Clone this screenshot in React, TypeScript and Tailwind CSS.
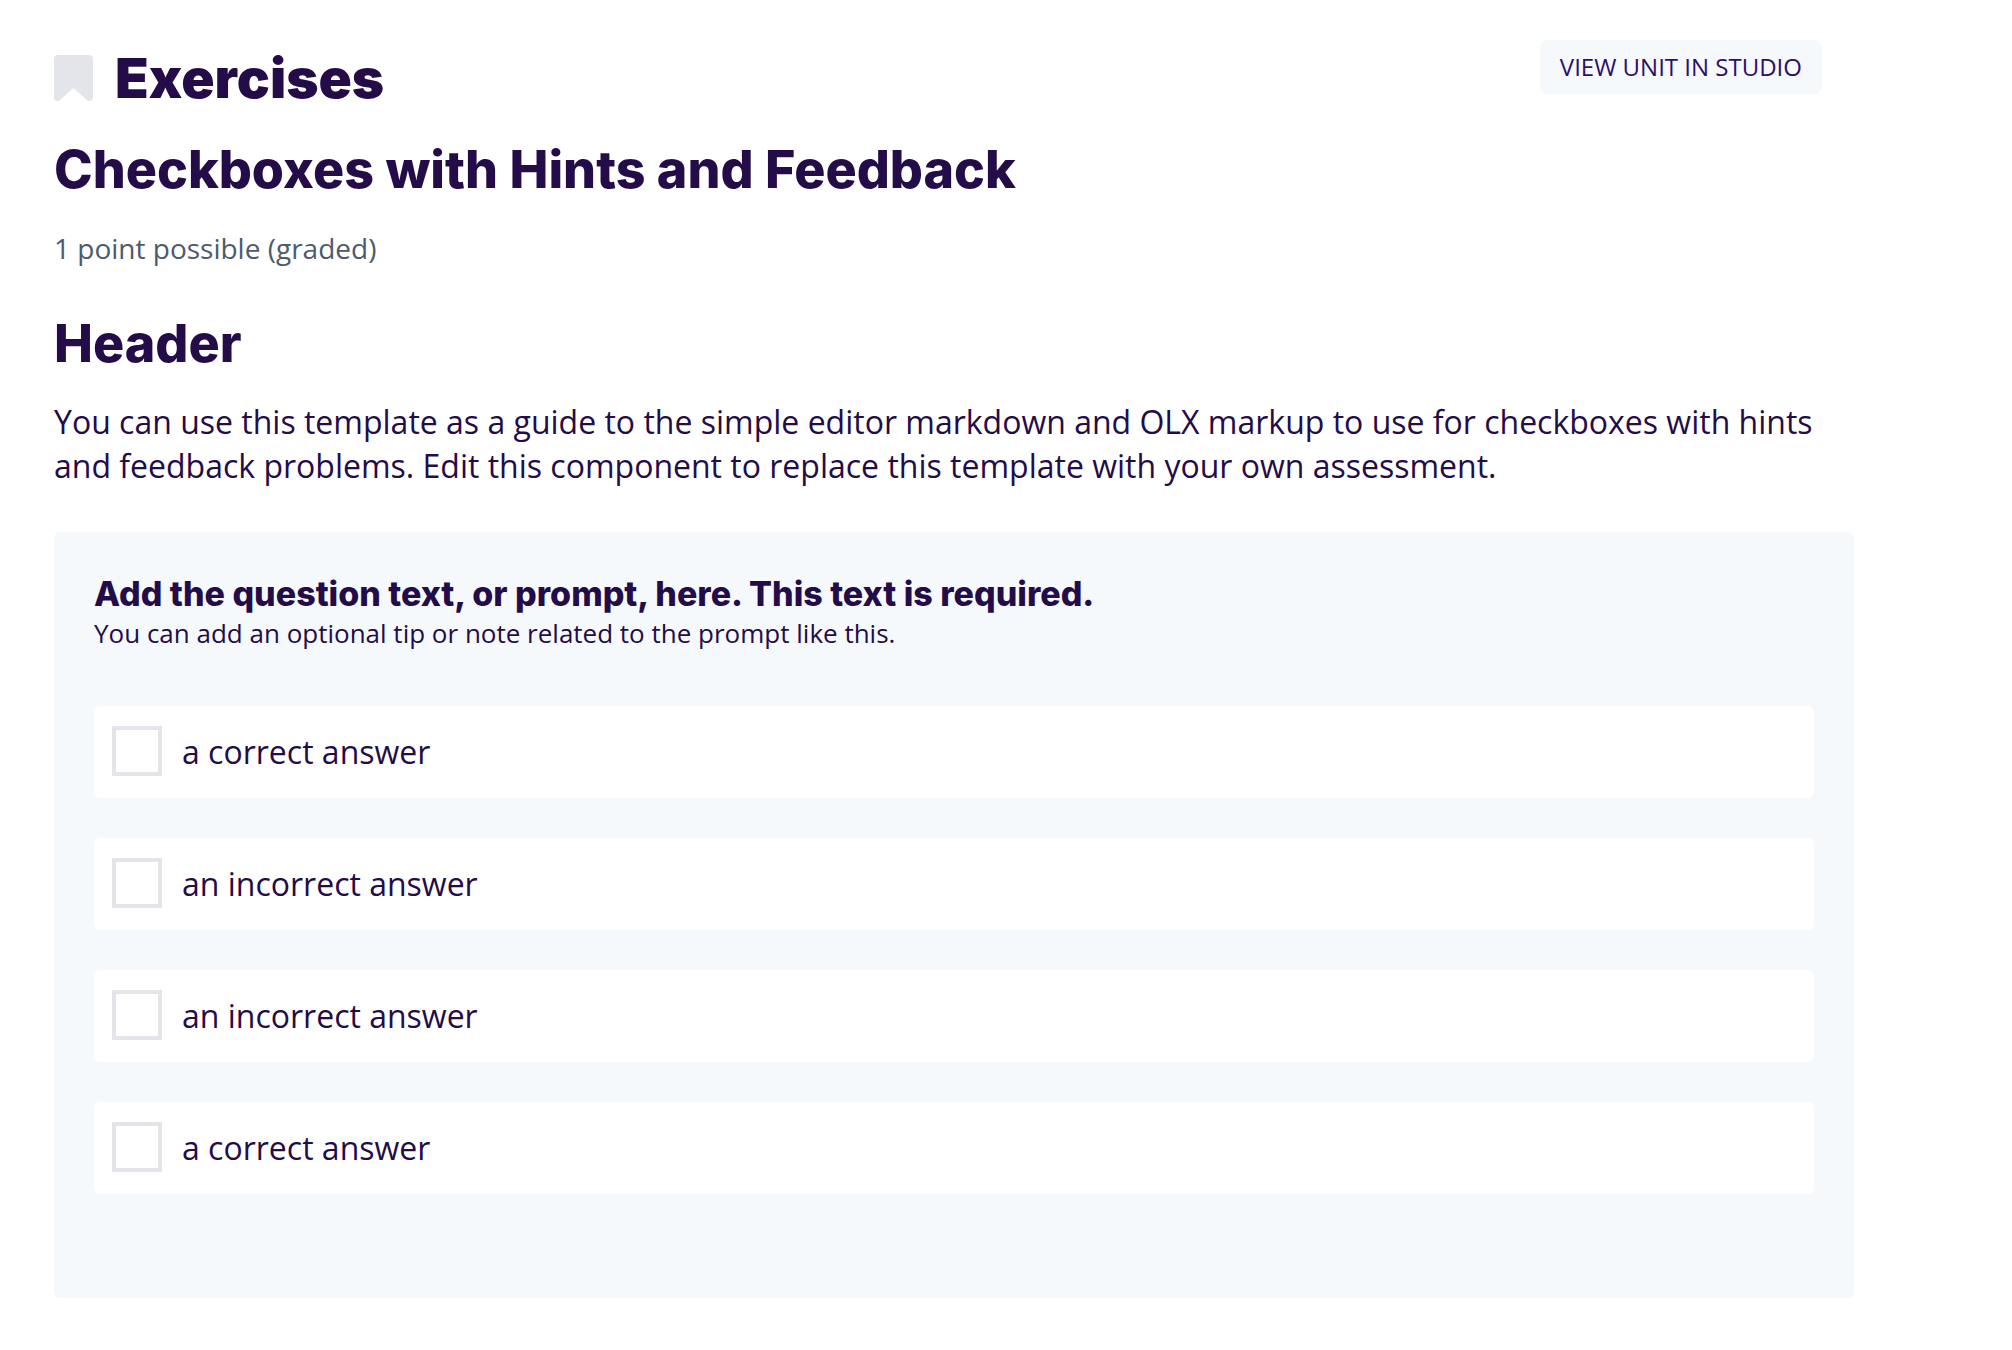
const answers = [
  { id: 'choice-1', label: 'a correct answer' },
  { id: 'choice-2', label: 'an incorrect answer' },
  { id: 'choice-3', label: 'an incorrect answer' },
  { id: 'choice-4', label: 'a correct answer' },
];

function BookmarkIcon() {
  return (
    <svg className="h-[46px] w-[39px]" viewBox="0 0 39 46" fill="#e4e5ea" aria-hidden="true">
      <path d="M4 0H35Q39 0 39 4V41.500Q39 45.600 35.500 46Q34 46 32.500 44.800L19.500 33L6.500 44.800Q5 46 3.500 46Q0 45.600 0 41.500V4Q0 0 4 0Z" />
    </svg>
  );
}

function Choice({ id, label }: { id: string; label: string }) {
  return (
    <li className="flex items-center rounded-md bg-white px-[18px] pt-5 pb-[22px]">
      <input
        id={id}
        type="checkbox"
        className="size-[50px] shrink-0 appearance-none border-4 border-[#e4e5ea] bg-white checked:bg-[#240c49]"
      />
      <label htmlFor={id} className="grow pt-0.5 pl-5 text-[32px] leading-[44px]">
        {label}
      </label>
    </li>
  );
}

export default function App() {
  return (
    <main className="min-h-screen bg-white pt-10 pr-[158px] pb-10 pl-[54px] font-['Open_Sans',sans-serif] text-[#240c49]">
      <header className="flex items-start justify-between pr-8">
        <div className="flex items-center gap-[22px] pt-2">
          <button type="button" aria-label="Bookmark this page">
            <BookmarkIcon />
          </button>
          <h1 className="font-['Inter',sans-serif] text-[55px] leading-[60px] font-black">Exercises</h1>
        </div>
        <a
          href="#studio"
          className="rounded-lg bg-[#f5f9fc] px-5 py-[11px] text-2xl leading-8 whitespace-nowrap text-[#2d0f6b]"
        >
          VIEW UNIT IN STUDIO
        </a>
      </header>

      <h2 className="mt-8 font-['Inter',sans-serif] text-[52px] leading-[60px] font-extrabold">
        Checkboxes with Hints and Feedback
      </h2>
      <p className="mt-7 text-[28px] leading-10 text-[#4d5b6b]">1 point possible (graded)</p>
      <h3 className="mt-[46px] font-['Inter',sans-serif] text-[52px] leading-[60px] font-extrabold">Header</h3>
      <p className="mt-[26px] text-[32px] leading-[44px]">
        You can use this template as a guide to the simple editor markdown and OLX markup to use for checkboxes with
        hints and feedback problems. Edit this component to replace this template with your own assessment.
      </p>

      <form className="mt-11 rounded-md bg-[#f5f9fc] px-10 pt-10 pb-[104px]">
        <fieldset>
          <legend className="font-['Inter',sans-serif] text-[34px] leading-[44px] font-extrabold">
            Add the question text, or prompt, here. This text is required.
          </legend>
          <p className="text-[26px] leading-[34px]">
            You can add an optional tip or note related to the prompt like this.
          </p>
          <ul className="mt-14 space-y-10">
            {answers.map((answer) => (
              <Choice key={answer.id} {...answer} />
            ))}
          </ul>
        </fieldset>
      </form>
    </main>
  );
}
